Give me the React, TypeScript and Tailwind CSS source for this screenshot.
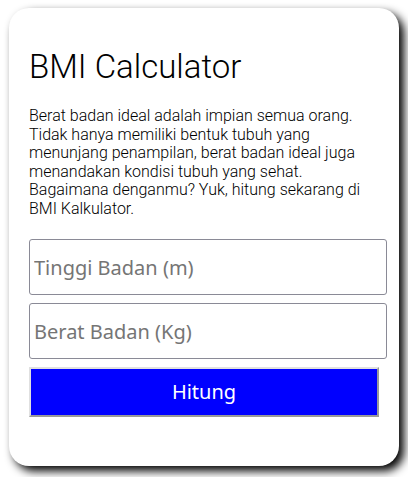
import React from "react";

export default function App() {
  return (
    <div className="w-[408px] h-[477px] bg-white pt-[8px] pl-[9px]">
      <div className="w-[390px] h-[458px] bg-white rounded-[20px] shadow-[5px_5px_10px_#000] pl-[20px] pt-[40px]">
        <h1 className="text-[33px] leading-[38px] text-black font-['Roboto',sans-serif] font-light m-0">
          BMI Calculator
        </h1>
        <p className="mt-[21px] w-[350px] text-[16px] leading-[18.5px] text-black font-['Roboto',sans-serif] font-light">
          Berat badan ideal adalah impian semua orang. Tidak hanya memiliki bentuk tubuh yang menunjang penampilan, berat badan ideal juga menandakan kondisi tubuh yang sehat. Bagaimana denganmu? Yuk, hitung sekarang di BMI Kalkulator.
        </p>
        <div className="mt-[21px] flex flex-col gap-[8px]">
          <input
            placeholder="Tinggi Badan (m)"
            className="w-[358px] h-[56px] border border-[#8a8a96] rounded-[3px] px-[4px] text-[20px] font-['Noto_Sans',sans-serif] placeholder:text-[#757575] outline-none"
          />
          <input
            placeholder="Berat Badan (Kg)"
            className="w-[358px] h-[56px] border border-[#8a8a96] rounded-[3px] px-[4px] text-[20px] font-['Noto_Sans',sans-serif] placeholder:text-[#757575] outline-none"
          />
          <button className="w-[350px] h-[50px] bg-[#0000ff] text-white text-[20px] font-['Noto_Sans',sans-serif] border-2 border-t-[#e0e0e0] border-l-[#e0e0e0] border-b-[#999999] border-r-[#999999]">
            Hitung
          </button>
        </div>
      </div>
    </div>
  );
}
